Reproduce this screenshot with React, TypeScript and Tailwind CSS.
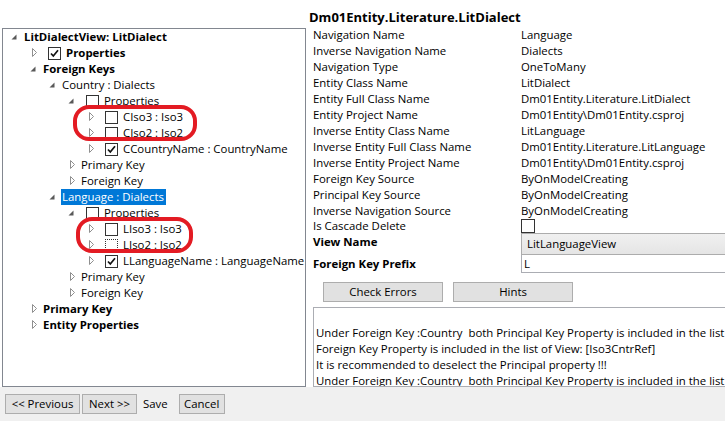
type Check = "none" | "empty" | "checked" | "focus"

type TreeRow = {
  level: number
  open: boolean
  check?: Check
  text: string
  bold?: boolean
  selected?: boolean
}

const indent = ["pl-[2px]", "pl-[21px]", "pl-[40px]", "pl-[59px]", "pl-[78px]"]

const tree: TreeRow[] = [
  { level: 0, open: true, text: "LitDialectView: LitDialect", bold: true },
  { level: 1, open: false, check: "checked", text: "Properties", bold: true },
  { level: 1, open: true, text: "Foreign Keys", bold: true },
  { level: 2, open: true, text: "Country : Dialects" },
  { level: 3, open: true, check: "empty", text: "Properties" },
  { level: 4, open: false, check: "empty", text: "CIso3 : Iso3" },
  { level: 4, open: false, check: "empty", text: "CIso2 : Iso2" },
  { level: 4, open: false, check: "checked", text: "CCountryName : CountryName" },
  { level: 3, open: false, text: "Primary Key" },
  { level: 3, open: false, text: "Foreign Key" },
  { level: 2, open: true, text: "Language : Dialects", selected: true },
  { level: 3, open: true, check: "empty", text: "Properties" },
  { level: 4, open: false, check: "empty", text: "LIso3 : Iso3" },
  { level: 4, open: false, check: "focus", text: "LIso2 : Iso2" },
  { level: 4, open: false, check: "checked", text: "LLanguageName : LanguageName" },
  { level: 3, open: false, text: "Primary Key" },
  { level: 3, open: false, text: "Foreign Key" },
  { level: 1, open: false, text: "Primary Key", bold: true },
  { level: 1, open: false, text: "Entity Properties", bold: true },
]

const props: [string, string][] = [
  ["Navigation Name", "Language"],
  ["Inverse Navigation Name", "Dialects"],
  ["Navigation Type", "OneToMany"],
  ["Entity Class Name", "LitDialect"],
  ["Entity Full Class Name", "Dm01Entity.Literature.LitDialect"],
  ["Entity Project Name", "Dm01Entity\\Dm01Entity.csproj"],
  ["Inverse Entity Class Name", "LitLanguage"],
  ["Inverse Entity Full Class Name", "Dm01Entity.Literature.LitLanguage"],
  ["Inverse Entity Project Name", "Dm01Entity\\Dm01Entity.csproj"],
  ["Foreign Key Source", "ByOnModelCreating"],
  ["Principal Key Source", "ByOnModelCreating"],
  ["Inverse Navigation Source", "ByOnModelCreating"],
]

const messages = [
  "",
  "Under Foreign Key :Country  both Principal Key Property is included in the list of View: [Iso3]",
  "Foreign Key Property is included in the list of View: [Iso3CntrRef]",
  "It is recommended to deselect the Principal property !!!",
  "Under Foreign Key :Country  both Principal Key Property is included in the list of View: [Iso2]",
]

function Expander({ open }: { open: boolean }) {
  return (
    <svg width="19" height="16" viewBox="0 0 19 16" className="shrink-0">
      {open ? (
        <path d="M11.5 5.5 L11.5 10.5 L6.5 10.5 Z" fill="#595959" />
      ) : (
        <path d="M8.5 3.5 L8.5 11.5 L12.5 7.5 Z" fill="white" stroke="#8f8f8f" />
      )}
    </svg>
  )
}

function CheckBox({ state }: { state: Check }) {
  if (state === "focus") {
    return <span className="ml-[5px] h-[13px] w-[13px] shrink-0 border border-dotted border-[#333] bg-white" />
  }
  return (
    <span className="ml-[5px] flex h-[13px] w-[13px] shrink-0 items-center justify-center border border-[#333] bg-white">
      {state === "checked" && (
        <svg width="11" height="11" viewBox="0 0 11 11">
          <path d="M2 5.5 L4.3 8 L9 2.2" fill="none" stroke="#111" strokeWidth="1.7" />
        </svg>
      )}
    </span>
  )
}

function Tree() {
  return (
    <div className="relative h-full overflow-hidden border border-[#828790] bg-white">
      {tree.map((row, i) => (
        <div key={i} className={`flex h-[16px] items-center whitespace-nowrap ${indent[row.level]}`}>
          <Expander open={row.open} />
          {row.check && row.check !== "none" && <CheckBox state={row.check} />}
          <span
            className={
              (row.check ? "ml-[5px] " : "") +
              (row.bold ? "font-bold " : "") +
              (row.selected ? "-ml-[1px] bg-[#0078d7] pl-[1px] pr-[2px] leading-[16px] text-white" : "leading-[16px]")
            }
          >
            {row.text}
          </span>
        </div>
      ))}
      <div className="absolute left-[70px] top-[76px] h-[36px] w-[124px] rounded-[16px] border-[4px] border-[#e31b23]" />
      <div className="absolute left-[73px] top-[188px] h-[36px] w-[117px] rounded-[16px] border-[4px] border-[#e31b23]" />
    </div>
  )
}

function Details() {
  return (
    <div className="flex h-full min-w-0 flex-1 flex-col overflow-hidden">
      <div className="pl-[3px] pt-[8px] text-[13px] font-bold leading-[19px]">Dm01Entity.Literature.LitDialect</div>
      <div className="flex min-h-0 flex-1 flex-col pl-[7px]">
        {props.map(([label, value]) => (
          <div key={label} className="flex h-[16px] items-center whitespace-nowrap leading-[16px]">
            <span className="w-[208px] shrink-0">{label}</span>
            <span>{value}</span>
          </div>
        ))}
        <div className="flex h-[14px] items-center whitespace-nowrap">
          <span className="w-[208px] shrink-0">Is Cascade Delete</span>
          <span className="h-[14px] w-[14px] border border-[#333] bg-white" />
        </div>
        <div className="flex h-[22px] whitespace-nowrap">
          <span className="w-[208px] shrink-0 pt-[1px] font-bold leading-[16px]">View Name</span>
          <div className="flex h-[22px] w-[230px] shrink-0 items-center border border-[#acacac] bg-gradient-to-b from-[#f0f0f0] to-[#e5e5e5] pl-[5px]">
            LitLanguageView
          </div>
        </div>
        <div className="flex h-[19px] whitespace-nowrap">
          <span className="w-[208px] shrink-0 pt-[1px] font-bold leading-[16px]">Foreign Key Prefix</span>
          <div className="flex h-[18px] w-[230px] shrink-0 items-center border border-t-0 border-[#abadb3] bg-white pl-[2px]">
            L
          </div>
        </div>
        <div className="mt-[8px] flex gap-[10px] pl-[10px]">
          <button className="h-[20px] w-[120px] border border-[#adadad] bg-[#e1e1e1] leading-[18px]">Check Errors</button>
          <button className="h-[20px] w-[120px] border border-[#adadad] bg-[#e1e1e1] leading-[18px]">Hints</button>
        </div>
        <div className="mt-[5px] min-h-0 w-[440px] flex-1 overflow-hidden border border-[#abadb3] bg-white pl-[2px] pt-[1px]">
          {messages.map((m, i) => (
            <div key={i} className="h-[16px] whitespace-pre leading-[16px]">
              {m}
            </div>
          ))}
        </div>
      </div>
    </div>
  )
}

export default function App() {
  return (
    <div className="flex h-[421px] w-[725px] flex-col overflow-hidden bg-white font-['Open_Sans',sans-serif] text-[11.4px] text-black">
      <div className="flex h-[387px] shrink-0">
        <div className="h-full w-[306px] shrink-0 pl-[2px] pt-[28px]">
          <Tree />
        </div>
        <Details />
      </div>
      <div className="flex h-[34px] items-start bg-[#f0f0f0] pl-[5px] pt-[7px]">
        <button className="h-[20px] w-[75px] border border-[#adadad] bg-[#e1e1e1] leading-[18px]">&lt;&lt; Previous</button>
        <button className="ml-[2px] h-[20px] w-[55px] border border-[#adadad] bg-[#e1e1e1] leading-[18px]">Next &gt;&gt;</button>
        <span className="ml-[6px] leading-[20px]">Save</span>
        <button className="ml-[11px] h-[20px] w-[46px] border border-[#adadad] bg-[#e1e1e1] leading-[18px]">Cancel</button>
      </div>
    </div>
  )
}
